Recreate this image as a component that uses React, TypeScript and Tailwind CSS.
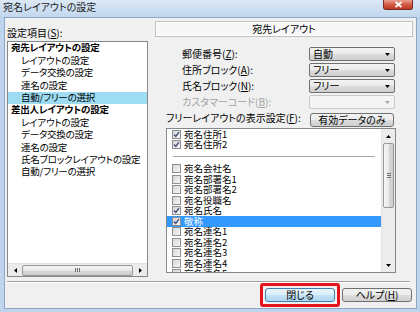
import React from "react";

const tree = [
  { t: "宛先レイアウトの設定", bold: true },
  { t: "レイアウトの設定" },
  { t: "データ交換の設定" },
  { t: "連名の設定" },
  { t: "自動/フリーの選択", sel: true },
  { t: "差出人レイアウトの設定", bold: true },
  { t: "レイアウトの設定" },
  { t: "データ交換の設定" },
  { t: "連名の設定" },
  { t: "氏名ブロックレイアウトの設定" },
  { t: "自動/フリーの選択" },
];

const topItems = [
  { t: "宛名住所1", on: true },
  { t: "宛名住所2", on: true },
];

const items = [
  { t: "宛名会社名", on: false },
  { t: "宛名部署名1", on: false },
  { t: "宛名部署名2", on: false },
  { t: "宛名役職名", on: false },
  { t: "宛名氏名", on: true },
  { t: "敬称", on: true, sel: true },
  { t: "宛名連名1", on: false },
  { t: "宛名連名2", on: false },
  { t: "宛名連名3", on: false },
  { t: "宛名連名4", on: false },
  { t: "宛名連名5", on: false },
];

const btn =
  "rounded-[3px] border border-[#707070] bg-[linear-gradient(#f3f3f3_0%,#ebebeb_48%,#dddddd_52%,#cfcfcf_100%)] flex items-center justify-center";

function Check({ on }: { on: boolean }) {
  return (
    <div className="w-[9px] h-[9px] border border-[#8e8f8f] bg-linear-to-br from-[#d6d6d6] to-[#f7f7f7] flex items-center justify-center shrink-0">
      {on && (
        <svg width="7" height="7" viewBox="0 0 7 7">
          <path d="M1 3.6 L2.8 5.5 L6 1.2" stroke="#3f4f7a" strokeWidth="1.4" fill="none" />
        </svg>
      )}
    </div>
  );
}

function Combo({ value, disabled }: { value?: string; disabled?: boolean }) {
  return (
    <div
      className={
        disabled
          ? "w-[86px] h-[14px] mr-[18px] rounded-[2px] border border-[#c9c9c9] bg-[#f4f4f4] flex items-center pl-[3px] pr-[4px]"
          : "w-[86px] h-[14px] mr-[18px] rounded-[2px] border border-[#707070] bg-[linear-gradient(#f3f3f3_0%,#ebebeb_48%,#dddddd_52%,#cfcfcf_100%)] flex items-center pl-[3px] pr-[4px]"
      }
    >
      <span className="flex-1">{value}</span>
      <svg width="5" height="3" viewBox="0 0 5 3">
        <polygon points="0,0 5,0 2.5,3" fill={disabled ? "#a6a6a6" : "#000"} />
      </svg>
    </div>
  );
}

function Row({ label, value, disabled }: { label: React.ReactNode; value?: string; disabled?: boolean }) {
  return (
    <div className="h-[16px] flex items-center">
      <span className={disabled ? "flex-1 pl-[27px] text-[#a3a3a3]" : "flex-1 pl-[27px]"}>{label}</span>
      <Combo value={value} disabled={disabled} />
    </div>
  );
}

export default function App() {
  return (
    <div className="w-[420px] h-[312px] overflow-hidden flex flex-col bg-[#bfd5ed] font-['Noto_Sans_CJK_JP',sans-serif] text-[10px] leading-none text-black [font-feature-settings:'palt']">
      {/* title bar */}
      <div className="h-[17px] shrink-0 flex items-start bg-linear-to-b from-[#dbe8f6] to-[#c2d7ee]">
        <span className="pl-[3px] pt-[2px] text-[#1b1b1b]">宛名レイアウトの設定</span>
        <div className="ml-auto mr-[7px] w-[30px] h-[10px] rounded-b-[3px] border border-t-0 border-[#7a2c22] bg-linear-to-b from-[#e8a092] via-[#d35a44] to-[#bf3a22] flex items-center justify-center">
          <svg width="9" height="7" viewBox="0 0 9 7">
            <path d="M1.5 1 L7.5 6 M7.5 1 L1.5 6" stroke="#fff" strokeWidth="1.8" />
          </svg>
        </div>
      </div>

      {/* client */}
      <div className="ml-[4px] mr-[3px] h-[292px] shrink-0 border border-[#8ea7c4] bg-[#f0f0f0] flex flex-col">
        <div className="h-[259px] flex">
          {/* left */}
          <div className="ml-[2px] w-[141px] flex flex-col">
            <div className="h-[23px] pt-[10px]">
              設定項目(<span className="underline">S</span>):
            </div>
            <div className="h-[236px] border border-[#828790] bg-white flex flex-col">
              <div className="flex-1 text-[9.5px] tracking-[-0.2px]">
                {tree.map((r, i) => (
                  <div
                    key={i}
                    className={`h-[12.4px] flex items-center whitespace-nowrap ${r.bold ? "pl-[3px] font-bold" : "pl-[13px]"} ${r.sel ? "bg-[#9edcf4]" : ""}`}
                  >
                    {r.t}
                  </div>
                ))}
              </div>
              {/* horizontal scrollbar */}
              <div className="h-[13px] flex items-center bg-[#ececec] border-t border-[#e2e2e2]">
                <div className="w-[14px] flex justify-center">
                  <svg width="3" height="5" viewBox="0 0 3 5">
                    <polygon points="3,0 3,5 0,2.5" fill="#000" />
                  </svg>
                </div>
                <div className="w-[111px] h-[11px] rounded-[2px] border border-[#989898] bg-[linear-gradient(#f6f6f6_0%,#e9e9e9_50%,#d8d8d8_51%,#cdcdcd_100%)] flex items-center justify-center gap-[1px]">
                  <div className="w-[1px] h-[4px] bg-[#6e6e6e]" />
                  <div className="w-[1px] h-[4px] bg-[#6e6e6e]" />
                  <div className="w-[1px] h-[4px] bg-[#6e6e6e]" />
                </div>
                <div className="flex-1 flex justify-center">
                  <svg width="3" height="5" viewBox="0 0 3 5">
                    <polygon points="0,0 0,5 3,2.5" fill="#000" />
                  </svg>
                </div>
              </div>
            </div>
          </div>

          {/* right */}
          <div className="ml-[7px] w-[258px] flex flex-col">
            <div className="mt-[3px] h-[16px] border border-[#c2c2c2] bg-[#f7f7f7] shadow-[inset_0_0_0_1px_#ffffff] flex items-center justify-center">
              宛先レイアウト
            </div>
            <div className="mt-[9px]">
              <Row label={<>郵便番号(<span className="underline">Z</span>):</>} value="自動" />
              <Row label={<>住所ブロック(<span className="underline">A</span>):</>} value="フリー" />
              <Row label={<>氏名ブロック(<span className="underline">N</span>):</>} value="フリー" />
              <Row label={<>カスタマーコード(<span className="underline">B</span>):</>} disabled />
            </div>
            <div className="mt-[3px] h-[14px] flex items-center">
              <span className="flex-1 pl-[11px] -mt-[5px]">
                フリーレイアウトの表示設定(<span className="underline">F</span>):
              </span>
              <div className={`${btn} w-[84px] h-[14px] mr-[19px]`}>有効データのみ</div>
            </div>
            <div className="mt-[1px] ml-[11px] mr-[17px] h-[145px] border border-[#828790] bg-white flex overflow-hidden">
              <div className="flex-1 flex flex-col overflow-hidden text-[9.5px]">
                {topItems.map((it, i) => (
                  <div key={i} className="h-[10.5px] shrink-0 flex items-center gap-[3px] pl-[5px]">
                    <Check on={it.on} />
                    <span>{it.t}</span>
                  </div>
                ))}
                <div className="h-[13.5px] shrink-0 flex items-center px-[6px]">
                  <div className="flex-1 h-[2px] border-t border-[#a8a8a8] border-b border-b-white" />
                </div>
                {items.map((it, i) => (
                  <div
                    key={i}
                    className={`h-[10.5px] shrink-0 flex items-center gap-[3px] pl-[5px] ${it.sel ? "bg-[#3399ff] text-white" : ""}`}
                  >
                    <Check on={it.on} />
                    <span>{it.t}</span>
                  </div>
                ))}
              </div>
              {/* vertical scrollbar */}
              <div className="w-[14px] flex flex-col bg-[#ececec] border-l border-[#e2e2e2]">
                <div className="h-[14px] flex items-center justify-center">
                  <svg width="5" height="3" viewBox="0 0 5 3">
                    <polygon points="0,3 5,3 2.5,0" fill="#000" />
                  </svg>
                </div>
                <div className="mx-[1px] h-[65px] rounded-[2px] border border-[#989898] bg-[linear-gradient(90deg,#f6f6f6_0%,#e9e9e9_50%,#d8d8d8_51%,#cdcdcd_100%)] flex flex-col items-center justify-center gap-[1px]">
                  <div className="w-[4px] h-[1px] bg-[#6e6e6e]" />
                  <div className="w-[4px] h-[1px] bg-[#6e6e6e]" />
                  <div className="w-[4px] h-[1px] bg-[#6e6e6e]" />
                </div>
                <div className="flex-1" />
                <div className="h-[14px] flex items-center justify-center">
                  <svg width="5" height="3" viewBox="0 0 5 3">
                    <polygon points="0,0 5,0 2.5,3" fill="#000" />
                  </svg>
                </div>
              </div>
            </div>
          </div>
        </div>

        {/* separator */}
        <div className="mt-[4px] ml-[2px] mr-[6px] h-[2px] border-t border-[#a0a0a0] border-b border-b-white" />

        {/* buttons */}
        <div className="h-[24px] flex items-center justify-end mr-[4px]">
          <div className="border-[3px] border-[#e5141c] rounded-[3px] p-[2px]">
            <div className="w-[70px] h-[14px] rounded-[3px] border border-[#3c7fb1] bg-[linear-gradient(#eaf5fd_0%,#d9eefb_48%,#c4e3f7_52%,#b0d6f1_100%)] flex items-center justify-center">
              閉じる
            </div>
          </div>
          <div className={`${btn} ml-[2px] w-[70px] h-[14px]`}>
            ヘルプ(<span className="underline">H</span>)
          </div>
        </div>
      </div>
    </div>
  );
}
